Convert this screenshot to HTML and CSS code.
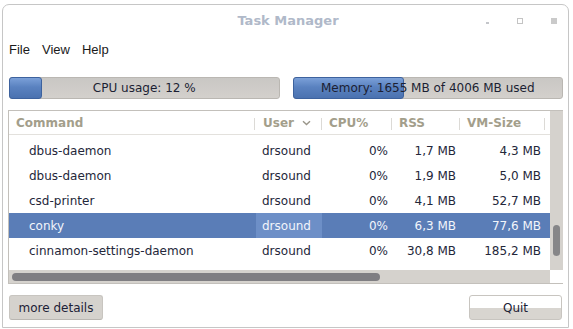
FILE: index.html
```html
<!DOCTYPE html>
<html>
<head>
<meta charset="utf-8">
<link rel="stylesheet" href="styles.css">
</head>
<body>
<div class="window">
  <div class="titlebar">
    <span class="title">Task Manager</span>
    <div class="wm-buttons">
      <span class="wm-min"></span>
      <span class="wm-max"></span>
      <span class="wm-close"></span>
    </div>
  </div>
  <div class="menubar">
    <span class="menu-item">File</span>
    <span class="menu-item">View</span>
    <span class="menu-item">Help</span>
  </div>
  <div class="bars">
    <div class="bar">
      <div class="bar-fill" style="width: 33px"></div>
      <span class="bar-label">CPU usage: 12 %</span>
    </div>
    <div class="bar">
      <div class="bar-fill" style="width: 111px"></div>
      <span class="bar-label">Memory: 1655 MB of 4006 MB used</span>
    </div>
  </div>
  <div class="tree">
    <div class="tree-main">
      <div class="row header">
        <div class="cell c-cmd h">Command</div>
        <div class="cell c-user h">User <svg class="caret" width="9" height="6" viewBox="0 0 9 6"><polyline points="1,1.2 4.5,4.6 8,1.2" fill="none" stroke="#9a968a" stroke-width="1.4"/></svg></div>
        <div class="cell c-cpu h">CPU%</div>
        <div class="cell c-rss h">RSS</div>
        <div class="cell c-vm h">VM-Size</div>
      </div>
      <div class="rows">
        <div class="row">
          <div class="cell c-cmd">dbus-daemon</div>
          <div class="cell c-user">drsound</div>
          <div class="cell c-cpu num">0%</div>
          <div class="cell c-rss num">1,7 MB</div>
          <div class="cell c-vm num">4,3 MB</div>
        </div>
        <div class="row">
          <div class="cell c-cmd">dbus-daemon</div>
          <div class="cell c-user">drsound</div>
          <div class="cell c-cpu num">0%</div>
          <div class="cell c-rss num">1,9 MB</div>
          <div class="cell c-vm num">5,0 MB</div>
        </div>
        <div class="row">
          <div class="cell c-cmd">csd-printer</div>
          <div class="cell c-user">drsound</div>
          <div class="cell c-cpu num">0%</div>
          <div class="cell c-rss num">4,1 MB</div>
          <div class="cell c-vm num">52,7 MB</div>
        </div>
        <div class="row selected">
          <div class="cell c-cmd">conky</div>
          <div class="cell c-user sorted">drsound</div>
          <div class="cell c-cpu num">0%</div>
          <div class="cell c-rss num">6,3 MB</div>
          <div class="cell c-vm num">77,6 MB</div>
        </div>
        <div class="row">
          <div class="cell c-cmd">cinnamon-settings-daemon</div>
          <div class="cell c-user">drsound</div>
          <div class="cell c-cpu num">0%</div>
          <div class="cell c-rss num">30,8 MB</div>
          <div class="cell c-vm num">185,2 MB</div>
        </div>
      </div>
    </div>
    <div class="vscroll"><div class="vthumb"></div></div>
    <div class="hscroll"><div class="hthumb"></div></div>
    <div class="corner"></div>
  </div>
  <div class="buttons">
    <button class="btn btn-details">more details</button>
    <button class="btn btn-quit">Quit</button>
  </div>
</div>
</body>
</html>
```

FILE: styles.css
```css
html, body {
  margin: 0;
  padding: 0;
  background: #ffffff;
}

body {
  font-family: "DejaVu Sans", sans-serif;
  font-size: 12px;
  color: #24273a;
}

.window {
  margin: 4px 0 0 2px;
  height: 322px;
  border: 1px solid #c6c6c6;
  border-radius: 7px 7px 0 0;
  background: #ffffff;
  display: flex;
  flex-direction: column;
  padding: 0 5px 0 6px;
  box-sizing: content-box;
  width: 554px;
}

.titlebar {
  height: 30px;
  display: flex;
  align-items: center;
  justify-content: center;
  position: relative;
}

.title {
  font-family: "DejaVu Sans", sans-serif;
  font-weight: bold;
  font-size: 13px;
  color: #b0b9c9;
  margin-left: 4px;
  margin-top: 1px;
}

.wm-buttons {
  position: absolute;
  right: 6px;
  top: 13px;
  display: flex;
  align-items: center;
  gap: 28px;
}

.wm-min {
  width: 3px;
  height: 2px;
  background: #c4c6ca;
  margin-top: 3px;
}

.wm-max {
  width: 4px;
  height: 4px;
  border: 1px solid #c4c4c4;
}

.wm-close {
  width: 6px;
  height: 6px;
  background: #cacaca;
}

.menubar {
  height: 28px;
  display: flex;
  align-items: center;
  gap: 12px;
  font-family: "Liberation Sans", sans-serif;
  font-size: 13px;
  color: #1a1a1a;
}

.bars {
  margin-top: 14px;
  display: flex;
  gap: 13px;
}

.bar {
  flex: 1;
  height: 20px;
  border: 1px solid #bab7b2;
  border-radius: 3px;
  background: linear-gradient(#c9c7c4, #d3d0cc);
  position: relative;
  display: flex;
  align-items: center;
  justify-content: center;
}

.bar-fill {
  position: absolute;
  left: -1px;
  top: -1px;
  border: 1px solid #3d629e;
  border-radius: 3px;
  background: linear-gradient(#7ba0d8, #5a82c0 45%, #4b72b0);
  box-sizing: border-box;
  height: 22px;
}

.bar-label {
  position: relative;
  color: #1c1f33;
  font-size: 12px;
}

.tree {
  margin-top: 11px;
  margin-left: -1px;
  height: 172px;
  border: 1px solid #c3c0bb;
  display: grid;
  grid-template-columns: 541px 13px;
  grid-template-rows: 159px 13px;
}

.tree-main {
  overflow: hidden;
  background: #ffffff;
}

.row {
  display: flex;
  height: 25px;
  align-items: center;
}

.header {
  height: 23px;
  border-bottom: 1px solid #e3e1dd;
}

.rows {
  padding-top: 3px;
}

.cell {
  box-sizing: border-box;
  height: 100%;
  display: flex;
  align-items: center;
  white-space: nowrap;
  position: relative;
}

.c-cmd { width: 247px; padding-left: 20px; }
.c-user { width: 66px; padding-left: 6px; }
.c-cpu { width: 70px; }
.c-rss { width: 68px; }
.c-vm { width: 90px; }

.num { justify-content: flex-end; padding-right: 4px; }
.c-vm.num { padding-right: 9px; }

.cell.h {
  font-weight: bold;
  color: #a39e8b;
  padding-left: 7px;
  padding-right: 0;
  justify-content: flex-start;
}

.cell.h::after {
  content: "";
  position: absolute;
  right: 0;
  top: 7px;
  height: 12px;
  width: 1px;
  background: #dcdad6;
}

.c-cmd.h::after { right: 1px; }
.c-vm.h::after { right: 5px; }

.caret {
  margin-left: 8px;
  margin-top: 1px;
}

.selected {
  background: #5a7db7;
  color: #f2f5fb;
}

.selected .sorted {
  background: #6d8fc7;
}

.vscroll {
  background: #d5d2cd;
  position: relative;
}

.vthumb {
  position: absolute;
  left: 3px;
  width: 7px;
  top: 114px;
  height: 31px;
  border-radius: 4px;
  background: #868688;
}

.hscroll {
  background: #d5d2cd;
  display: flex;
  align-items: center;
  padding-left: 3px;
}

.hthumb {
  width: 368px;
  height: 8px;
  border-radius: 4px;
  background: #7f7e82;
}

.corner {
  background: #ffffff;
}

.buttons {
  margin-top: 11px;
  display: flex;
  justify-content: space-between;
}

.btn {
  font-family: "DejaVu Sans", sans-serif;
  font-size: 12px;
  color: #1c2136;
  height: 25px;
  border-radius: 3px;
  padding: 0;
  margin: 0;
}

.btn-details {
  width: 94px;
  background: #d5d2cd;
  border: 1px solid #c8c5c0;
  border-bottom-color: #b9b6b1;
}

.btn-quit {
  width: 93px;
  margin-right: 1px;
  background: linear-gradient(#ffffff 0, #ffffff 52%, #d8d5d0 52%, #d8d5d0 100%);
  border: 1px solid #c8c5c0;
}
```
